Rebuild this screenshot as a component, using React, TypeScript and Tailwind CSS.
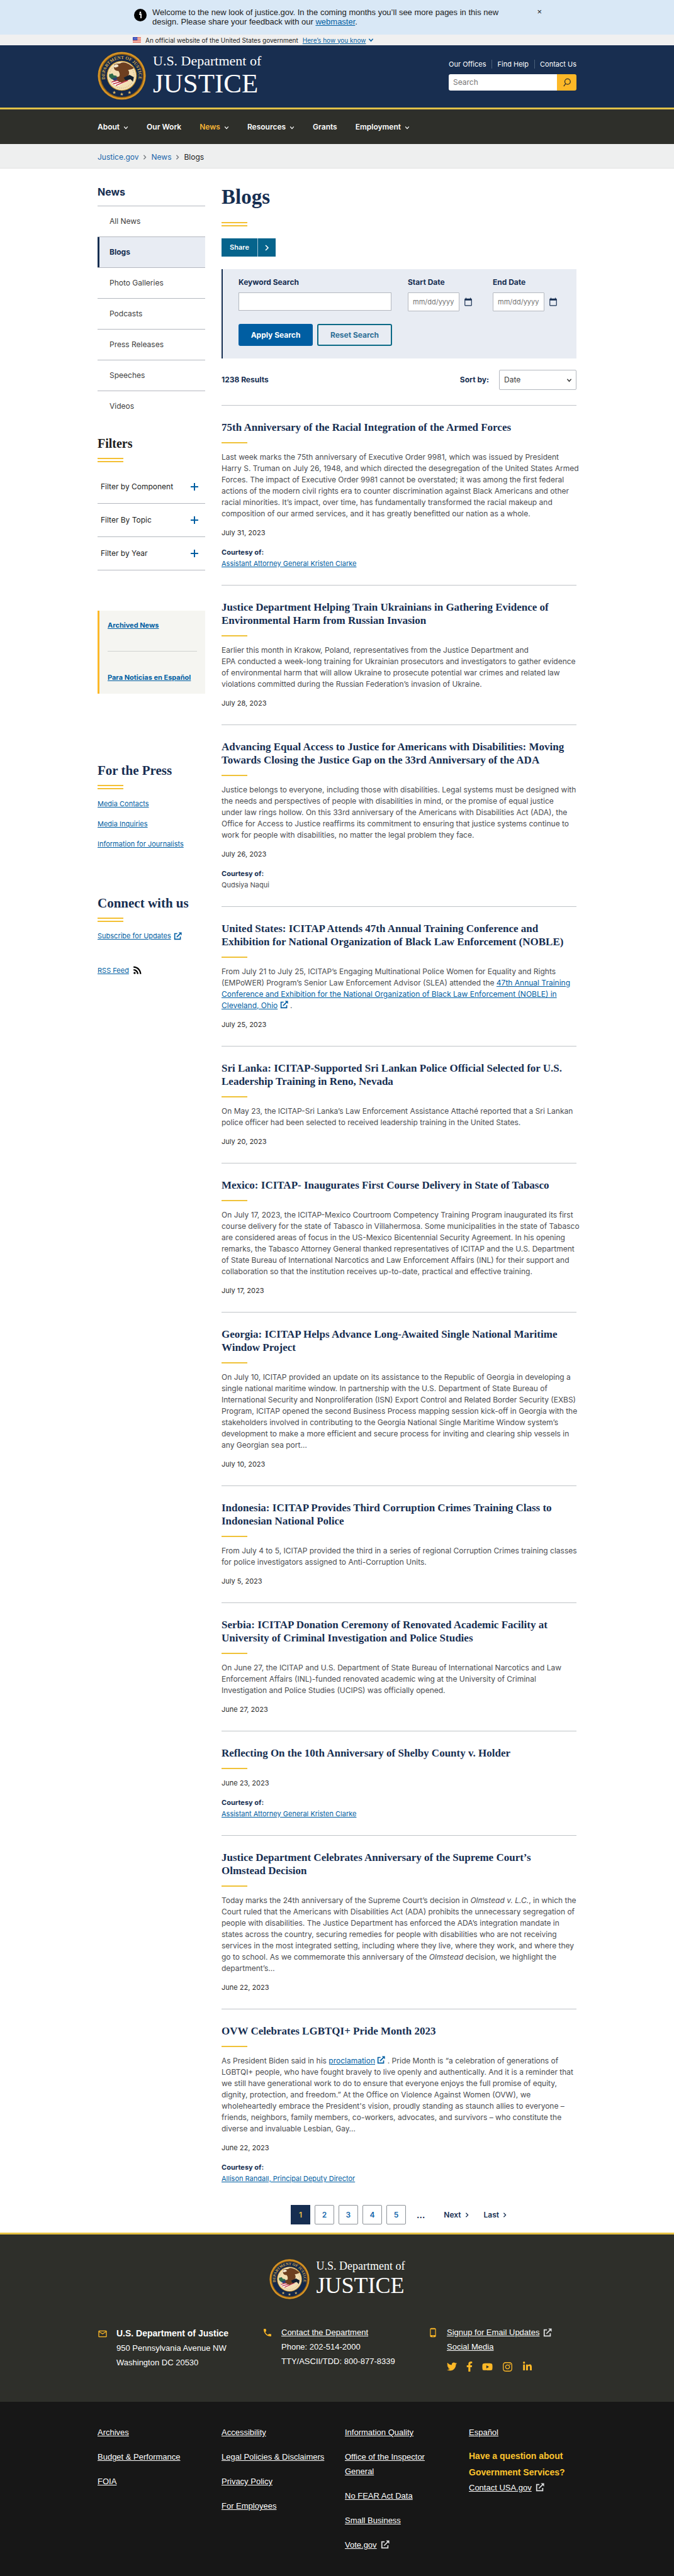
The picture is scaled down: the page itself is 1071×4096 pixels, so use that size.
import type { ReactNode } from "react";
import {
  FaFacebookF,
  FaInstagram,
  FaLinkedinIn,
  FaTwitter,
  FaYoutube,
} from "react-icons/fa";
import {
  MdCalendarToday,
  MdOutlineMail,
  MdPhone,
  MdPhoneAndroid,
  MdRssFeed,
} from "react-icons/md";

type Post = {
  title: string;
  body?: ReactNode;
  date: string;
  courtesy?: string;
  courtesyLink?: boolean;
};

function External({ className }: { className: string }) {
  return (
    <svg viewBox="0 0 16 16" className={className} fill="none" stroke="currentColor" strokeWidth="2" aria-hidden="true">
      <path d="M7 3H2v11h11V9" />
      <path d="M6 10l7-7" />
      <path d="M9.500 .5H15.500V6.500z" fill="currentColor" stroke="none" />
    </svg>
  );
}

function Chevron({ className, d }: { className: string; d: string }) {
  return (
    <svg viewBox="0 0 10 10" className={className} fill="none" stroke="currentColor" strokeWidth="1.600" aria-hidden="true">
      <path d={d} />
    </svg>
  );
}

const DOWN = "M1.500 3l3.500 4 3.500-4";
const RIGHT = "M3 1l4 4-4 4";

const posts: Post[] = [
  {
    title: "75th Anniversary of the Racial Integration of the Armed Forces",
    body: `Last week marks the 75th anniversary of Executive Order 9981, which was issued by President
Harry S. Truman on July 26, 1948, and which directed the desegregation of the United States Armed
Forces. The impact of Executive Order 9981 cannot be overstated; it was among the first federal
actions of the modern civil rights era to counter discrimination against Black Americans and other
racial minorities. It’s impact, over time, has fundamentally transformed the racial makeup and
composition of our armed services, and it has greatly benefitted our nation as a whole.`,
    date: "July 31, 2023",
    courtesy: "Assistant Attorney General Kristen Clarke",
    courtesyLink: true,
  },
  {
    title: "Justice Department Helping Train Ukrainians in Gathering Evidence of\nEnvironmental Harm from Russian Invasion",
    body: `Earlier this month in Krakow, Poland, representatives from the Justice Department and
EPA conducted a week-long training for Ukrainian prosecutors and investigators to gather evidence
of environmental harm that will allow Ukraine to prosecute potential war crimes and related law
violations committed during the Russian Federation’s invasion of Ukraine.`,
    date: "July 28, 2023",
  },
  {
    title: "Advancing Equal Access to Justice for Americans with Disabilities: Moving\nTowards Closing the Justice Gap on the 33rd Anniversary of the ADA",
    body: `Justice belongs to everyone, including those with disabilities. Legal systems must be designed with
the needs and perspectives of people with disabilities in mind, or the promise of equal justice
under law rings hollow. On this 33rd anniversary of the Americans with Disabilities Act (ADA), the
Office for Access to Justice reaffirms its commitment to ensuring that justice systems continue to
work for people with disabilities, no matter the legal problem they face.`,
    date: "July 26, 2023",
    courtesy: "Qudsiya Naqui",
  },
  {
    title: "United States: ICITAP Attends 47th Annual Training Conference and\nExhibition for National Organization of Black Law Enforcement (NOBLE)",
    body: (
      <>
        From July 21 to July 25, ICITAP’s Engaging Multinational Police Women for Equality and Rights
        <br />
        {"(EMPoWER) Program’s Senior Law Enforcement Advisor (SLEA) attended the "}
        <a href="#noble" className="text-[#005ea2] underline">
          47th Annual Training
          <br />
          Conference and Exhibition for the National Organization of Black Law Enforcement (NOBLE) in
          <br />
          Cleveland, Ohio
        </a>{" "}
        <External className="inline size-[13px] align-[-1px] text-[#005ea2]" /> .
      </>
    ),
    date: "July 25, 2023",
  },
  {
    title: "Sri Lanka: ICITAP-Supported Sri Lankan Police Official Selected for U.S.\nLeadership Training in Reno, Nevada",
    body: `On May 23, the ICITAP-Sri Lanka’s Law Enforcement Assistance Attaché reported that a Sri Lankan
police officer had been selected to received leadership training in the United States.`,
    date: "July 20, 2023",
  },
  {
    title: "Mexico: ICITAP- Inaugurates First Course Delivery in State of Tabasco",
    body: `On July 17, 2023, the ICITAP-Mexico Courtroom Competency Training Program inaugurated its first
course delivery for the state of Tabasco in Villahermosa. Some municipalities in the state of Tabasco
are considered areas of focus in the US-Mexico Bicentennial Security Agreement. In his opening
remarks, the Tabasco Attorney General thanked representatives of ICITAP and the U.S. Department
of State Bureau of International Narcotics and Law Enforcement Affairs (INL) for their support and
collaboration so that the institution receives up-to-date, practical and effective training.`,
    date: "July 17, 2023",
  },
  {
    title: "Georgia: ICITAP Helps Advance Long-Awaited Single National Maritime\nWindow Project",
    body: `On July 10, ICITAP provided an update on its assistance to the Republic of Georgia in developing a
single national maritime window. In partnership with the U.S. Department of State Bureau of
International Security and Nonproliferation (ISN) Export Control and Related Border Security (EXBS)
Program, ICITAP opened the second Business Process mapping session kick-off in Georgia with the
stakeholders involved in contributing to the Georgia National Single Maritime Window system’s
development to make a more efficient and secure process for inviting and clearing ship vessels in
any Georgian sea port…`,
    date: "July 10, 2023",
  },
  {
    title: "Indonesia: ICITAP Provides Third Corruption Crimes Training Class to\nIndonesian National Police",
    body: `From July 4 to 5, ICITAP provided the third in a series of regional Corruption Crimes training classes
for police investigators assigned to Anti-Corruption Units.`,
    date: "July 5, 2023",
  },
  {
    title: "Serbia: ICITAP Donation Ceremony of Renovated Academic Facility at\nUniversity of Criminal Investigation and Police Studies",
    body: `On June 27, the ICITAP and U.S. Department of State Bureau of International Narcotics and Law
Enforcement Affairs (INL)-funded renovated academic wing at the University of Criminal
Investigation and Police Studies (UCIPS) was officially opened.`,
    date: "June 27, 2023",
  },
  {
    title: "Reflecting On the 10th Anniversary of Shelby County v. Holder",
    date: "June 23, 2023",
    courtesy: "Assistant Attorney General Kristen Clarke",
    courtesyLink: true,
  },
  {
    title: "Justice Department Celebrates Anniversary of the Supreme Court’s\nOlmstead Decision",
    body: (
      <>
        Today marks the 24th anniversary of the Supreme Court’s decision in <i>Olmstead v. L.C.</i>, in which the
        <br />
        Court ruled that the Americans with Disabilities Act (ADA) prohibits the unnecessary segregation of
        <br />
        people with disabilities. The Justice Department has enforced the ADA’s integration mandate in
        <br />
        states across the country, securing remedies for people with disabilities who are not receiving
        <br />
        services in the most integrated setting, including where they live, where they work, and where they
        <br />
        go to school. As we commemorate this anniversary of the <i>Olmstead</i> decision, we highlight the
        <br />
        department’s…
      </>
    ),
    date: "June 22, 2023",
  },
  {
    title: "OVW Celebrates LGBTQI+ Pride Month 2023",
    body: (
      <>
        As President Biden said in his{" "}
        <a href="#proclamation" className="text-[#005ea2] underline">
          proclamation
        </a>{" "}
        <External className="inline size-[13px] align-[-1px] text-[#005ea2]" />
        {" . Pride Month is “a celebration of generations of"}
        <br />
        LGBTQI+ people, who have fought bravely to live openly and authentically. And it is a reminder that
        <br />
        we still have generational work to do to ensure that everyone enjoys the full promise of equity,
        <br />
        dignity, protection, and freedom.” At the Office on Violence Against Women (OVW), we
        <br />
        {"wholeheartedly embrace the President's vision, proudly standing as staunch allies to everyone –"}
        <br />
        friends, neighbors, family members, co-workers, advocates, and survivors – who constitute the
        <br />
        diverse and invaluable Lesbian, Gay…
      </>
    ),
    date: "June 22, 2023",
    courtesy: "Allison Randall, Principal Deputy Director",
    courtesyLink: true,
  },
];

function Seal({ className, id }: { className: string; id: string }) {
  return (
    <svg viewBox="0 0 100 100" className={className} role="img" aria-label="Department of Justice seal">
      <circle cx="50" cy="50" r="49.500" fill="#b97a1c" />
      <circle cx="50" cy="50" r="47.500" fill="none" stroke="#e8a62c" strokeWidth="2.500" strokeDasharray="2 1" />
      <circle cx="50" cy="50" r="45" fill="#7d571c" />
      <circle cx="50" cy="50" r="43.500" fill="#14284a" />
      <circle cx="50" cy="50" r="31" fill="#c9952f" />
      <circle cx="50" cy="50" r="29.500" fill="#f3dfb4" />
      <path id={id} d="M21.900 71.100A35 35 0 1 1 78.100 71.100" fill="none" />
      <text fill="#d9ab4a" fontSize="9.500" fontWeight="700" fontFamily="Liberation Serif, serif">
        <textPath href={`#${id}`} startOffset="50%" textAnchor="middle">
          DEPARTMENT OF JUSTICE
        </textPath>
      </text>
      <circle cx="50" cy="50" r="25.500" fill="none" stroke="#b09a6c" strokeWidth="2" strokeDasharray="1 1.500" pathLength="100" opacity="0.500" />
      <path d="M24 47l7-2 2 4 6 1 2 5-5 3-7-1-5-5z" fill="#2f6b4a" />
      <path d="M30 56l12-4 7 5-3 6-9 1z" fill="#2c3f74" />
      <path d="M28 62l30-7 7 4-23 12-9-2z" fill="#fff" />
      <path d="M29 63l27-7M32 67l29-9M38 70l25-11" stroke="#c02a3c" strokeWidth="2" />
      <path d="M34 27c6-4 11 0 15-4 8-3 19 4 26 11-4 3-8 3-12 4 4 5 2 11-2 14l-3 8-8 4-8-3-3-7 6-3c2-4 0-8-2-11-5 0-9-3-9-6z" fill="#6d3f20" />
      <path d="M36 27c4-2 8 0 7 4l-6 2-5-2z" fill="#f0e4cc" />
      <path d="M54 54l12-6 9 5-2 9-5-5-10 3z" fill="#14202f" />
      <g fill="#dcb768">
        <path d="M34.500 81l1 2.500h2.500l-2 1.500.8 2.500-2.300-1.500-2.300 1.500.8-2.500-2-1.500h2.500z" />
        <path d="M50 84.500l1 2.500h2.500l-2 1.500.8 2.500-2.300-1.500-2.300 1.500.8-2.500-2-1.500h2.500z" />
        <path d="M66 81l1 2.500h2.500l-2 1.500.8 2.500-2.300-1.500-2.300 1.500.8-2.500-2-1.500h2.500z" />
      </g>
    </svg>
  );
}

function Flag() {
  return (
    <svg viewBox="0 0 16 11" className="h-[9px] w-[13px]" aria-hidden="true">
      <path fill="#fff" d="M0 0h16v11H0z" />
      <path stroke="#db3e1f" d="M0 .5h16M0 2.500h16M0 4.500h16M0 6.500h16M0 8.500h16M0 10.500h16" />
      <path fill="#1e33b1" d="M0 0h9v6H0z" />
      <path stroke="#fff" strokeWidth=".7" strokeDasharray="1 1" d="M1 1.500h8M2 3h7M1 4.500h8" />
    </svg>
  );
}

function DoubleRule({ className }: { className: string }) {
  return <div className={`h-[7px] w-[41px] border-y-2 border-[#f4c033] ${className}`} />;
}

function Article({ title, body, date, courtesy, courtesyLink }: Post) {
  return (
    <article className="border-t border-[#c0c4c8] pt-6 pb-[25px]">
      <h2 className="-mr-4 font-['Liberation_Serif',serif] text-[17px] leading-[21px] font-bold whitespace-pre-line text-[#162e51]">
        {title}
      </h2>
      <div className="mt-[13px] mb-[13px] h-0.5 w-[41px] bg-[#f0c238]" />
      {body && (
        <p className="-mr-4 mb-3 text-[12px] leading-[18px] whitespace-pre-line text-[#4a4c50]">{body}</p>
      )}
      <p className="text-[11px] leading-[18px] text-[#2b2b2b]">{date}</p>
      {courtesy && (
        <div className="mt-[13px] text-[11px] leading-[18px]">
          <p className="font-bold text-[#162e51]">Courtesy of:</p>
          {courtesyLink ? (
            <a href="#author" className="block text-[#005ea2] underline">
              {courtesy}
            </a>
          ) : (
            <p className="text-[#4a4c50]">{courtesy}</p>
          )}
        </div>
      )}
    </article>
  );
}

const menu = [
  { label: "About", drop: true },
  { label: "Our Work" },
  { label: "News", drop: true, active: true },
  { label: "Resources", drop: true },
  { label: "Grants" },
  { label: "Employment", drop: true },
];

const sections = ["All News", "Blogs", "Photo Galleries", "Podcasts", "Press Releases", "Speeches", "Videos"];

const footerColumns = [
  ["Archives", "Budget & Performance", "FOIA"],
  ["Accessibility", "Legal Policies & Disclaimers", "Privacy Policy", "For Employees"],
  ["Information Quality", "Office of the Inspector General", "No FEAR Act Data", "Small Business", "Vote.gov"],
];

const wrap = "mx-auto w-full max-w-[761px]";

function DateField({ id, label }: { id: string; label: string }) {
  return (
    <div>
      <label htmlFor={id} className="block text-[12px] leading-4 font-bold text-[#162e51]">
        {label}
      </label>
      <div className="mt-2 flex items-center gap-[7px]">
        <input
          id={id}
          placeholder="mm/dd/yyyy"
          className="h-[30px] w-[82px] rounded-[1px] border border-[#b4b8bf] bg-white px-[7px] text-[11px] placeholder:text-[#757575]"
        />
        <button type="button" aria-label={`Pick ${label}`}>
          <MdCalendarToday className="size-[14px] text-[#162e51]" />
        </button>
      </div>
    </div>
  );
}

export default function App() {
  return (
    <div className="min-h-screen bg-white font-['Inter','Liberation_Sans',sans-serif] text-[#1b1b1b]">
      <section className="bg-[#d9e8f6]">
        <div className="mx-auto flex h-[55px] max-w-[651px] items-start gap-[9px] pt-3 font-['Liberation_Sans',sans-serif] text-[13px] leading-[15px]">
          <svg viewBox="0 0 20 20" className="ml-[3px] mt-0.5 size-5 shrink-0" aria-hidden="true">
            <circle cx="10" cy="10" r="10" />
            <circle cx="10" cy="5.800" r="1.400" fill="#fff" />
            <path d="M8 8.500h3v6.500" fill="none" stroke="#fff" strokeWidth="1.800" />
          </svg>
          <p className="flex-1">
            Welcome to the new look of justice.gov. In the coming months you’ll see more pages in this new
            <br />
            design. Please share your feedback with our{" "}
            <a href="#webmaster" className="text-[#005ea2] underline">
              webmaster
            </a>
            .
          </p>
          <button type="button" aria-label="Close" className="text-[13px] leading-[14px]">
            ×
          </button>
        </div>
      </section>
      <section className="bg-[#f0f0f0]">
        <div className="mx-auto flex h-[17px] max-w-[651px] items-center gap-[7px] pl-px text-[10px] leading-4">
          <Flag />
          <span>An official website of the United States government</span>
          <button type="button" className="flex items-center gap-1 text-[#005ea2]">
            <span className="underline">Here’s how you know</span>
            <Chevron className="size-[9px]" d={DOWN} />
          </button>
        </div>
      </section>

      <header>
        <div className="bg-[#182e50]">
          <div className={`${wrap} flex h-[99px] justify-between text-white`}>
            <a href="#home" className="flex items-start gap-[11px] pt-[10px]">
              <Seal id="ring-top" className="size-[77px]" />
              <span className="block pt-1 font-['Liberation_Serif',serif]">
                <span className="block text-[22px] leading-[21px]">U.S. Department of</span>
                <span className="mt-1 block text-[43px] leading-[43px]">JUSTICE</span>
              </span>
            </a>
            <div className="w-[203px] pt-[23px]">
              <ul className="flex justify-between text-[11px] leading-[14px]">
                <li><a href="#offices">Our Offices</a></li>
                <li className="w-px bg-[#4a6079]" />
                <li><a href="#help">Find Help</a></li>
                <li className="w-px bg-[#4a6079]" />
                <li><a href="#contact">Contact Us</a></li>
              </ul>
              <form className="mt-[9px] flex h-[26px] overflow-hidden rounded-[3px]">
                <input
                  aria-label="Search"
                  placeholder="Search"
                  className="min-w-0 flex-1 bg-white px-[7px] text-[12px] text-black placeholder:text-[#757575]"
                />
                <button type="button" aria-label="Submit search" className="flex w-[31px] items-center justify-center bg-[#fdb827]">
                  <svg viewBox="0 0 16 16" className="size-[14px] text-[#2e2f2a]" fill="none" stroke="currentColor" strokeWidth="1.500">
                    <circle cx="9" cy="6.500" r="5" />
                    <path d="M5.500 10.500L2 15" />
                  </svg>
                </button>
              </form>
            </div>
          </div>
        </div>
        <nav className="border-t-[3px] border-[#e0c148] bg-[#2e2f2a]">
          <ul className={`${wrap} flex h-[55px] items-center gap-[29px] text-[12px] font-semibold text-white`}>
            {menu.map((m) => (
              <li key={m.label}>
                <a href="#menu" className={`flex items-center gap-[6px] ${m.active ? "text-[#f5b335]" : ""}`}>
                  {m.label}
                  {m.drop && <Chevron className="mt-[3px] size-2 text-white" d={DOWN} />}
                </a>
              </li>
            ))}
          </ul>
        </nav>
        <nav aria-label="Breadcrumb" className="border-b border-[#e2e2e2] bg-[#eeefef]">
          <div className={`${wrap} flex h-[38px] items-center gap-[6px] pt-1 text-[12px]`}>
            <a href="#home" className="text-[#1a66ab]">Justice.gov</a>
            <Chevron className="size-2 text-[#71767a]" d={RIGHT} />
            <a href="#news" className="text-[#1a66ab]">News</a>
            <Chevron className="size-2 text-[#71767a]" d={RIGHT} />
            <span>Blogs</span>
          </div>
        </nav>
      </header>

      <div className={`${wrap} flex gap-[26px]`}>
        <aside className="w-[171px] shrink-0 pt-[26px]">
          <h2 className="pb-[11px] text-[16px] leading-[22px] font-bold text-[#162e51]">News</h2>
          <ul className="text-[12px]">
            {sections.map((s) => (
              <li key={s} className="h-[49px] border-t border-[#b4b8bf]">
                {s === "Blogs" ? (
                  <a href="#section" className="flex h-full items-center border-l-[3px] border-[#162e51] bg-[#e8ecf3] pl-4 font-bold text-[#162e51]">
                    {s}
                  </a>
                ) : (
                  <a href="#section" className="flex h-full items-center pl-[19px] text-[#3d3d3d]">
                    {s}
                  </a>
                )}
              </li>
            ))}
          </ul>

          <h2 className="mt-[22px] font-['Liberation_Serif',serif] text-[20px] leading-[26px] font-bold">Filters</h2>
          <DoubleRule className="mt-[10px]" />
          <div className="mt-[13px] text-[12px]">
            {["Filter by Component", "Filter By Topic", "Filter by Year"].map((f) => (
              <button key={f} type="button" className="flex h-[53px] w-full items-center justify-between border-b border-[#b4b8bf] pr-[11px] pl-[5px]">
                {f}
                <svg viewBox="0 0 12 12" className="size-3 text-[#005ea2]" stroke="currentColor" strokeWidth="2" aria-hidden="true">
                  <path d="M6 0v12M0 6h12" />
                </svg>
              </button>
            ))}
          </div>

          <div className="mt-16 border-l-[3px] border-[#fdb827] bg-[#f5f5f1] px-[13px] pt-[14px] pb-[17px] text-[11px] leading-[18px] font-bold text-[#005ea2]">
            <a href="#archived" className="block underline">Archived News</a>
            <hr className="mt-8 border-[#d0d2d0]" />
            <a href="#espanol" className="mt-[32px] block whitespace-nowrap underline">Para Noticias en Español</a>
          </div>

          <h2 className="mt-[109px] font-['Liberation_Serif',serif] text-[21px] leading-[26px] font-bold text-[#162e51]">For the Press</h2>
          <DoubleRule className="mt-[10px]" />
          <ul className="mt-[14px] flex flex-col gap-[14px] text-[11px] leading-[18px] text-[#005ea2] underline">
            <li><a href="#contacts">Media Contacts</a></li>
            <li><a href="#inquiries">Media Inquiries</a></li>
            <li><a href="#journalists">Information for Journalists</a></li>
          </ul>

          <h2 className="mt-[72px] font-['Liberation_Serif',serif] text-[21px] leading-[26px] font-bold text-[#162e51]">Connect with us</h2>
          <DoubleRule className="mt-[10px]" />
          <div className="mt-[13px] flex flex-col gap-[36px] text-[11px] leading-[18px] text-[#005ea2]">
            <p className="flex items-center gap-1">
              <a href="#subscribe" className="underline">Subscribe for Updates</a>
              <External className="size-[13px]" />
            </p>
            <p className="flex items-center gap-1">
              <a href="#rss" className="underline">RSS Feed</a>
              <MdRssFeed className="size-[19px] text-black" />
            </p>
          </div>
        </aside>

        <main className="min-w-0 flex-1 pt-[25px]">
          <h1 className="font-['Liberation_Serif',serif] text-[33px] leading-10 font-bold text-[#162e51]">Blogs</h1>
          <DoubleRule className="mt-5" />
          <button type="button" className="mt-[19px] flex h-[29px] w-[86px] bg-[#06648c] text-[11px] leading-[29px] font-semibold text-white">
            <span className="flex-1 text-center">Share</span>
            <span className="flex h-full w-[29px] items-center justify-center border-l border-[#a8c8d8]">
              <Chevron className="size-[10px]" d={RIGHT} />
            </span>
          </button>

          <form className="mt-5 border-l-2 border-[#162e51] bg-[#e8ecf3] px-[25px] pt-[13px] pb-5">
            <div className="flex gap-[26px] pr-[5px]">
              <div className="flex-1">
                <label htmlFor="keyword" className="block text-[12px] leading-4 font-bold text-[#162e51]">
                  Keyword Search
                </label>
                <input id="keyword" className="mt-2 h-[29px] w-full border border-[#b4b8bf] bg-white px-2 text-[12px]" />
              </div>
              <DateField id="start" label="Start Date" />
              <div className="pl-1.5">
                <DateField id="end" label="End Date" />
              </div>
            </div>
            <div className="mt-5 flex gap-[7px] text-[12px] font-bold">
              <button type="button" className="h-[35px] w-[118px] rounded-[3px] bg-[#005ea2] text-white">
                Apply Search
              </button>
              <button type="button" className="h-[35px] w-[119px] rounded-[3px] border-2 border-[#0b6a86] text-[#2c6f96]">
                Reset Search
              </button>
            </div>
          </form>

          <div className="mt-[18px] mb-6 flex h-8 items-center text-[12px] font-bold text-[#162e51]">
            <p className="flex-1">1238 Results</p>
            <label htmlFor="sort" className="mr-4">Sort by:</label>
            <div className="relative">
              <select id="sort" className="h-8 w-[123px] appearance-none rounded-[2px] border border-[#b4b8bf] bg-white px-[7px] font-normal text-[#3d3d3d]">
                <option>Date</option>
              </select>
              <Chevron className="pointer-events-none absolute top-3 right-[7px] size-[9px] text-[#3d3d3d]" d={DOWN} />
            </div>
          </div>

          {posts.map((p) => (
            <Article key={p.title} {...p} />
          ))}

          <nav aria-label="Pagination" className="mt-2 mb-[13px] flex h-[31px] items-center justify-center text-[12px] font-semibold text-[#162e51]">
            <ul className="flex items-center gap-[7px]">
              <li>
                <a href="#p1" aria-current="page" className="flex size-[31px] items-center justify-center bg-[#162e51] text-[#e5c04a]">1</a>
              </li>
              {["2", "3", "4", "5"].map((n) => (
                <li key={n}>
                  <a href="#page" className="flex size-[31px] items-center justify-center rounded-[2px] border border-[#8d9297] text-[#0f65ab]">{n}</a>
                </li>
              ))}
            </ul>
            <span className="ml-[17px] text-[14px]">…</span>
            <a href="#next" className="ml-[30px] flex items-center gap-[5px]">
              Next <Chevron className="size-2" d={RIGHT} />
            </a>
            <a href="#last" className="ml-[23px] flex items-center gap-[5px]">
              Last <Chevron className="size-2" d={RIGHT} />
            </a>
          </nav>
        </main>
      </div>

      <footer className="text-white">
        <div className="border-t-[3px] border-[#e6c243] bg-[#2e2f2a] pt-[39px] pb-[48px]">
          <a href="#home" className="flex items-start justify-center gap-[11px]">
            <Seal id="ring-bottom" className="size-16" />
            <span className="block pt-0.5 font-['Liberation_Serif',serif]">
              <span className="block text-[18px] leading-[18px]">U.S. Department of</span>
              <span className="mt-1 block text-[36px] leading-9">JUSTICE</span>
            </span>
          </a>
          <div className={`${wrap} mt-[41px] grid grid-cols-[262px_263px_1fr] font-['Liberation_Sans',sans-serif] text-[13px] leading-[23px]`}>
            <div className="flex gap-[14px] pt-0.5">
              <MdOutlineMail className="mt-1 size-4 shrink-0 text-[#fdb827]" />
              <div>
                <h2 className="text-[14px] font-bold">U.S. Department of Justice</h2>
                <p>950 Pennsylvania Avenue NW</p>
                <p>Washington DC 20530</p>
              </div>
            </div>
            <div className="flex gap-[14px]">
              <MdPhone className="mt-1 size-4 shrink-0 text-[#fdb827]" />
              <div>
                <a href="#contact" className="underline">Contact the Department</a>
                <p>Phone: 202-514-2000</p>
                <p>TTY/ASCII/TDD: 800-877-8339</p>
              </div>
            </div>
            <div className="flex gap-[14px]">
              <MdPhoneAndroid className="mt-1 size-4 shrink-0 text-[#fdb827]" />
              <div>
                <p className="flex items-center gap-1.5">
                  <a href="#signup" className="underline">Signup for Email Updates</a>
                  <External className="size-[14px] text-[#dcdee0]" />
                </p>
                <p><a href="#social" className="underline">Social Media</a></p>
                <div className="mt-3 flex h-4 items-center gap-[15px] text-[#fdb827]">
                  <a href="#twitter" aria-label="Twitter"><FaTwitter className="size-4" /></a>
                  <a href="#facebook" aria-label="Facebook"><FaFacebookF className="h-4 w-[10px]" /></a>
                  <a href="#youtube" aria-label="YouTube"><FaYoutube className="size-[17px]" /></a>
                  <a href="#instagram" aria-label="Instagram"><FaInstagram className="size-[17px]" /></a>
                  <a href="#linkedin" aria-label="LinkedIn"><FaLinkedinIn className="size-4" /></a>
                </div>
              </div>
            </div>
          </div>
        </div>
        <div className="bg-[#171717] pt-[37px] pb-[38px]">
          <div className={`${wrap} grid grid-cols-[197px_196px_197px_1fr] font-['Liberation_Sans',sans-serif] text-[13px] leading-[23px]`}>
            {footerColumns.map((col) => (
              <ul key={col[0]} className="-mr-4 flex flex-col gap-4 pr-6">
                {col.map((l) => (
                  <li key={l} className={l.startsWith("Office") ? "pr-8" : ""}>
                    <a href="#footer" className="underline">{l}</a>
                    {l === "Vote.gov" && <External className="ml-1.5 inline size-[14px] align-[-2px] text-[#dcdee0]" />}
                  </li>
                ))}
              </ul>
            ))}
            <div>
              <a href="#espanol" className="underline">Español</a>
              <p className="mt-[13px] text-[14px] leading-[26px] font-bold text-[#fdc42e]">
                Have a question about
                <br />
                Government Services?
              </p>
              <a href="#usa" className="underline">Contact USA.gov</a>
              <External className="ml-1.5 inline size-[14px] align-[-2px] text-[#dcdee0]" />
            </div>
          </div>
        </div>
      </footer>
    </div>
  );
}
